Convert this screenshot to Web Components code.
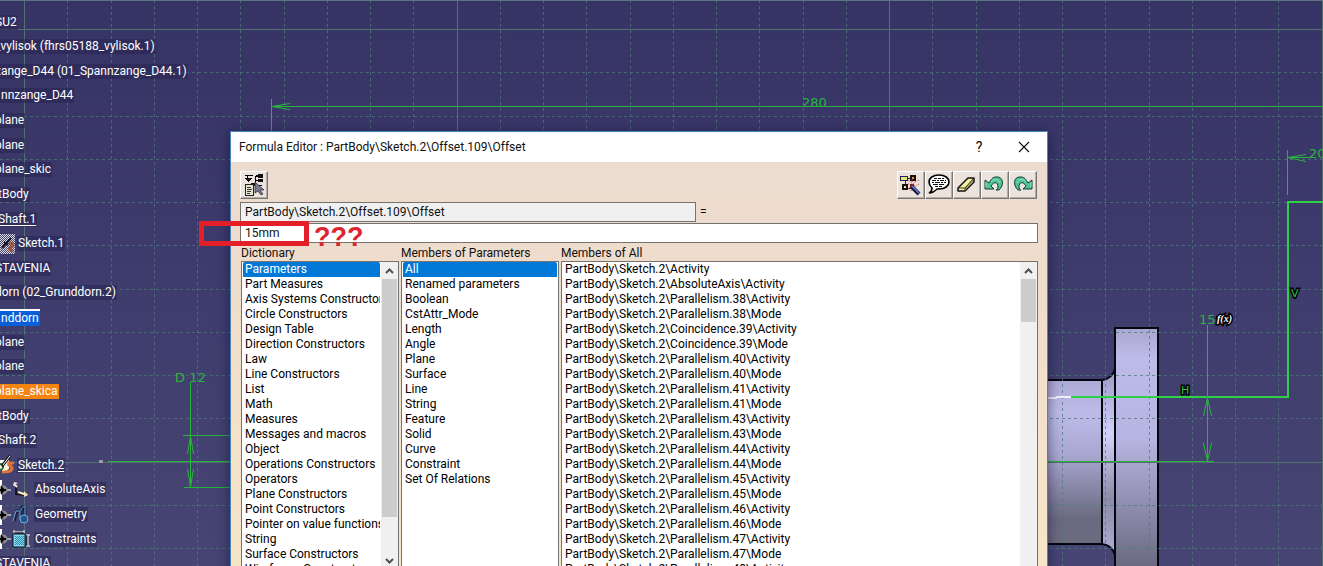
<!DOCTYPE html>
<html lang="en">
<head>
<meta charset="utf-8">
<title>Formula Editor</title>
<style>
    html, body { height: 100%; margin: 0; }
    body {
        overflow: hidden;
        font-family: Roboto, "Open Sans", sans-serif;
        font-size: 12px;
    }
</style>
</head>
<body>
<cad-workspace>
    <sketch-canvas slot="canvas"></sketch-canvas>
    <spec-tree slot="tree"></spec-tree>
    <formula-dialog slot="window" heading="Formula Editor : PartBody\Sketch.2\Offset.109\Offset"></formula-dialog>
    <red-note slot="note">???</red-note>
</cad-workspace>

<script>
// -----------------------------------------
// 1. Data
// -----------------------------------------
const PARAM = 'PartBody\\Sketch.2\\';

const DICTIONARY = [
    'Parameters', 'Part Measures', 'Axis Systems Constructors', 'Circle Constructors', 'Design Table',
    'Direction Constructors', 'Law', 'Line Constructors', 'List', 'Math', 'Measures', 'Messages and macros',
    'Object', 'Operations Constructors', 'Operators', 'Plane Constructors', 'Point Constructors',
    'Pointer on value functions', 'String', 'Surface Constructors', 'Wireframe Constructors'
];

const MEMBER_TYPES = [
    'All', 'Renamed parameters', 'Boolean', 'CstAttr_Mode', 'Length', 'Angle', 'Plane', 'Surface',
    'Line', 'String', 'Feature', 'Solid', 'Curve', 'Constraint', 'Set Of Relations'
];

const MEMBERS = [`${PARAM}Activity`, `${PARAM}AbsoluteAxis\\Activity`];
['Parallelism.38', 'Coincidence.39', 'Parallelism.40', 'Parallelism.41', 'Parallelism.43',
 'Parallelism.44', 'Parallelism.45', 'Parallelism.46', 'Parallelism.47', 'Parallelism.48'].forEach(name => {
    MEMBERS.push(`${PARAM}${name}\\Activity`, `${PARAM}${name}\\Mode`);
});

// kind: cut / nick = label runs off the left edge by more or less
const TREE = [
    { text: 'SU2', kind: 'cut' },
    { text: '_vylisok (fhrs05188_vylisok.1)', kind: 'cut' },
    { text: 'zange_D44 (01_Spannzange_D44.1)', kind: 'cut' },
    { text: 'nnzange_D44' },
    { text: 'plane', kind: 'cut' },
    { text: 'plane', kind: 'cut' },
    { text: 'plane_skic', kind: 'cut' },
    { text: 'tBody', kind: 'nick' },
    { text: 'Shaft.1', kind: 'nick', mark: 'under' },
    { text: 'Sketch.1', icon: 'sketchOff' },
    { text: 'STAVENIA', kind: 'cut' },
    { text: 'dorn (02_Grunddorn.2)', kind: 'cut' },
    { text: 'nddorn', mark: 'blue' },
    { text: 'plane', kind: 'cut' },
    { text: 'plane', kind: 'cut' },
    { text: 'plane_skica', kind: 'cut', mark: 'orange' },
    { text: 'tBody', kind: 'nick' },
    { text: 'Shaft.2', kind: 'nick' },
    { text: 'Sketch.2', icon: 'sketch', mark: 'under' },
    { text: 'AbsoluteAxis', icon: 'axis', child: true },
    { text: 'Geometry', icon: 'geometry', child: true },
    { text: 'Constraints', icon: 'constraints', child: true },
    { text: 'STAVENIA', kind: 'cut' }
];

// -----------------------------------------
// 2. Icons
// -----------------------------------------
const svg = (w, h, body) =>
    `<svg width="${w}" height="${h}" viewBox="0 0 ${w} ${h}" fill="none" aria-hidden="true">${body}</svg>`;

const ICONS = {
    sketchOff: svg(15, 20, `
        <defs><pattern id="chk" width="2" height="2" patternUnits="userSpaceOnUse"><path d="M0 0h1v1H0zM1 1h1v1H1z" fill="#dcdce8"/></pattern></defs>
        <rect width="15" height="20" fill="#4a4668"/><rect width="15" height="20" fill="url(#chk)"/>
        <path d="M2 14 11 4M4 8l4 3" stroke="#15151f" stroke-width="2"/><path d="M9 9c5 0 5 3 2 4s-1 5 2 3" stroke="#9a5840" stroke-width="3"/>`),
    sketch: svg(15, 20, `
        <path d="M0 5h9v9H0z" fill="#f4f4ec"/><circle cx="0" cy="12" r="3" stroke="#2c6b32" stroke-width="2"/>
        <path d="M2 11 10 1" stroke="#16161c" stroke-width="3"/><path d="M3 10 10 1" stroke="#fff"/>
        <path d="M14 8H9c-2 3 4 3 3 6s-5 3-10 3" stroke="#dc743c" stroke-width="3"/><path d="M2 16c2-4 5-4 6-1" fill="#fff2d0"/>`),
    axis: svg(18, 18, `
        <path d="M4 5v8l10 1" stroke="#16161c" stroke-width="2"/><path d="m2 3 3 3M6 11l9 3" stroke="#f6ead0" stroke-width="2"/>
        <path d="M12 10v6l4-2z" fill="#f6e2b0"/><path d="m1 5 1-4 4 1z" fill="#f0e4da"/>`),
    geometry: svg(18, 20, `
        <path d="M2 16 5 6h4v9M10 6V2h3v10" stroke="#14203e" stroke-width="3"/>
        <path d="M1 16 4 6h4v9M9 6c0-4 4-5 4-5v11" stroke="#6aaee0"/>
        <circle cx="12" cy="14" r="4" fill="#2a5488" stroke="#6ab0e4"/>`),
    constraints: svg(18, 20, `
        <defs><pattern id="dot" width="2" height="2" patternUnits="userSpaceOnUse"><path d="M0 0h1v1H0zM1 1h1v1H1z" fill="#2d8ca6"/></pattern></defs>
        <path d="M2 1v4M12 1v4M2 3h10" stroke="#fff"/><path d="M2 4h10" stroke="#101018"/>
        <rect x="1" y="5" width="12" height="13" fill="#7fd8ee" stroke="#0c1420"/><rect x="3" y="7" width="9" height="9" fill="url(#dot)"/>
        <path d="M14 6h4M14 17h4" stroke="#fff"/><path d="M15 6v11" stroke="#101018"/><path d="M16 6v11" stroke="#fff"/>`),
    tree: svg(24, 24, `
        <g shape-rendering="crispEdges"><path d="M3 2.500h8M5.500 2v6M13 3h8M13.500 3v10M13 7.500h6M12 12.500h8" stroke="#000"/><path d="M14 2.500h7" stroke="#000" stroke-width="2"/>
        <path d="M2 5h8l-4 4zM16 1h5v4h-5zM16 6h5v3h-5zM9 10h4v2H9z" fill="#111"/>
        <rect x="3" y="11" width="8" height="11" fill="#e6e8d0" stroke="#222"/><path d="M5 14h4M5 16h5M5 18h4M5 20h3" stroke="#333"/></g>
        <path d="m13 9 9 8h-4l3 4-2 1-3-4-3 2z" fill="#77778e" stroke="#252536" stroke-width=".7"/>`),
    wizard: svg(24, 24, `
        <g shape-rendering="crispEdges"><path d="M8 5h6M6 8v4M5 15h8M8 12v3" stroke="#1e2258"/><rect x="1" y="3" width="7" height="4" fill="#f0e474" stroke="#1c205c"/>
        <rect x="12" y="3" width="4" height="4" fill="#d8a040" stroke="#17120c" stroke-width="2"/><rect x="4" y="12" width="4" height="4" fill="#f2e4b0" stroke="#17120c" stroke-width="2"/><rect x="11" y="11" width="4" height="4" fill="#5a2018"/></g>
        <path d="m9 7 8 7M17 8l-8 8M13 6v3M20 11l-3 2M10 11H8M12 18v-3M19 8l1-2" stroke="#c8383c" stroke-dasharray="1 1"/>
        <path d="m13 14 7 7" stroke="#10163c" stroke-width="4"/><path d="m13 13 7 7" stroke="#6a82dc" stroke-width="1.5"/>`),
    bubble: svg(24, 24, `
        <path d="M12 2c6 0 10 3 10 7s-4 7-10 7h-2c-2 2-4 4-8 4 2-1 3-3 3-5-2-2-3-3-3-6 0-4 4-7 10-7z" fill="#fff" stroke="#000" stroke-width="1.6"/>
        <g stroke="#111"><path d="M7 5.500h10" stroke-dasharray="3 1"/><path d="M5 7.500h14" stroke-dasharray="4 1 2 1"/><path d="M5 9.500h14" stroke-dasharray="2 1 5 1"/><path d="M6 11.500h12" stroke-dasharray="5 1"/><path d="M8 13.500h8" stroke-dasharray="3 1"/></g>`),
    eraser: svg(24, 24, `
        <path d="m3 15 10-10h6v4l-9 9H3z" fill="#f6f2a4" stroke="#111" stroke-width="1.5" stroke-linejoin="round"/>
        <path d="m10 17 8-8V6l-8 9z" fill="#a89864"/><path d="M3 15h7l8-9M10 15v3" stroke="#3c3820"/>`),
    undo: svg(24, 24, `
        <path d="M2 7v9h9l-3-3c3-5 7-4 7 1 0 2-1 3-2 3h3c5-4 5-14-3-13-4 0-5 3-7 6z" fill="#4fc29a" stroke="#123c2e" stroke-linejoin="round"/><path d="M3 9v5M8 9c3-3 7-4 9 1" stroke="#8ee8c4"/>`),
    redo: svg(24, 24, `
        <path d="M21 7v9h-9l3-3c-3-5-7-4-7 1 0 2 1 3 2 3H7c-5-4-5-14 3-13 4 0 5 3 7 6z" fill="#4fc29a" stroke="#123c2e" stroke-linejoin="round"/><path d="M20 9v5M15 9c-3-3-7-4-9 1" stroke="#8ee8c4"/>`),
    close: svg(12, 12, `<path d="m1 1 10 10M11 1 1 11" stroke="#111" stroke-width="1.2"/>`),
    up: svg(9, 6, `<path d="m1 5 3.500-3.500L8 5" stroke="#505050" stroke-width="2"/>`),
    down: svg(9, 6, `<path d="m1 1 3.500 3.500L8 1" stroke="#505050" stroke-width="2"/>`)
};

/**
 * Attaches an open shadow root filled with the given markup
 * @param {HTMLElement} host
 * @param {string} html
 */
const render = (host, html) => {
    const template = document.createElement('template');
    template.innerHTML = html;
    host.attachShadow({ mode: 'open' }).appendChild(template.content.cloneNode(true));
};

// -----------------------------------------
// 3. Workspace and sketch
// -----------------------------------------
class CadWorkspace extends HTMLElement {
    constructor() {
        super();
        render(this, `
            <style>
                :host {
                    display: block;
                    position: relative;
                    height: 100vh;
                    overflow: hidden;
                    background: linear-gradient(#363365, #3f3d6d 55%, #474573);
                }
                ::slotted([slot="canvas"]) { position: absolute; inset: 0; }
                ::slotted([slot="tree"]) { position: absolute; left: 0; top: 12px; bottom: -8px; }
                ::slotted([slot="window"]) { position: absolute; left: 230px; right: 275px; top: 131px; }
                ::slotted([slot="note"]) { position: absolute; left: 199px; top: 221px; }
            </style>
            <slot name="canvas"></slot>
            <slot name="tree"></slot>
            <slot name="window"></slot>
            <slot name="note"></slot>
        `);
    }
}

class SketchCanvas extends HTMLElement {
    constructor() {
        super();
        render(this, `
            <style>
                :host { display: block; }
                svg { display: block; width: 100%; height: 100%; font-family: "DejaVu Sans", sans-serif; }
                .dash { stroke: #4f7a79; stroke-dasharray: 3 3; opacity: .75; }
                .major { stroke: #51706f; }
                .dim { stroke: #28b43c; fill: none; }
                .val { fill: #28b43c; font-size: 13px; }
                .axis { fill: #28c840; stroke: #000; stroke-width: 3; paint-order: stroke; font-size: 11px; }
                .fx { fill: #fff; stroke: #000; stroke-width: 3; paint-order: stroke; font: italic bold 10px "Liberation Serif", serif; }
                .edge { stroke: #05050f; stroke-width: 2; fill: none; }
            </style>
            <svg fill="none">
                <defs>
                    <linearGradient id="body" x2="0" y2="1"><stop stop-color="#aeaad6"/><stop offset=".2" stop-color="#bdbbe8"/><stop offset=".45" stop-color="#aaa8d2"/><stop offset=".85" stop-color="#6a697f"/><stop offset="1" stop-color="#6d6b80"/></linearGradient>
                    <linearGradient id="flange" x2="0" y2="1"><stop stop-color="#a9a7ce"/><stop offset=".12" stop-color="#bdbbe8"/><stop offset=".45" stop-color="#b6b4e0"/><stop offset="1" stop-color="#65647a"/></linearGradient>
                    <linearGradient id="neck" x2="0" y2="1"><stop stop-color="#9c9ac4"/><stop offset=".35" stop-color="#d2d1fa"/><stop offset=".7" stop-color="#8b8aa8"/><stop offset="1" stop-color="#b0aed4"/></linearGradient>
                </defs>
                <rect x="1040" y="380" width="62" height="164" fill="url(#body)"/>
                <path d="M1102 380q10-1 13-11v186q-3-10-13-11z" fill="url(#neck)"/>
                <rect x="1115" y="328" width="43" height="248" fill="url(#flange)"/>
                <path class="edge" d="M1040 380h62q10-1 13-11V328h43v240M1102 380v164M1040 544h62q10 1 13 11M1115 369v197"/>
                <g id="grid"></g>

                <path class="dim" d="M271.500 99v33M271 106.500h1060M290 103.500l-18 3 18 3"/>
                <text class="val" x="802" y="107">280</text>
                <path class="dim" d="M190.500 382v105M183 435.500h60M108 461.500h135M184 487.500h59M187.500 454l3-18 3 18M187.500 469l3 18 3-18"/>
                <text class="val" x="175" y="382">D 12</text>
                <rect x="99" y="460" width="4" height="3" fill="#9a9aa8"/>
                <path class="dim" d="M1287.500 150v45M1306 154.500l-18 3 18 4M1288 157.500h22"/>
                <text class="val" x="1309" y="158">20</text>
                <path d="M1330 202h-42v195h-218" stroke="#2fd048" stroke-width="2"/>
                <path d="M1040 398h16l1-1h14" stroke="#f0f0f8" stroke-width="2"/>
                <path class="dim" d="M1207.500 325v136M1040 461.500h174M1203.500 416l4-18 4 18M1203.500 443l4 18 4-18"/>
                <text class="val" x="1199" y="324">15</text>
                <text class="fx" x="1217" y="322">f(x)</text>
                <text class="axis" x="1181" y="394">H</text>
                <text class="axis" x="1291" y="297">V</text>
                <path d="M0 .500h4000" stroke="#5f7280"/>
            </svg>
        `);
    }

    connectedCallback() {
        // One solid line in ten, the others dashed
        const pitch = 43.25;
        let lines = '';
        for (let i = 0; i < 60; i++) {
            const x = Math.floor(24.5 + i * pitch) + 0.5;
            const y = Math.floor(29.5 + i * pitch) + 0.5;
            const cls = i % 10 ? 'dash' : 'major';
            lines += `<path class="${cls}" d="M${x} 0v2600M0 ${y}h2600"/>`;
        }
        this.shadowRoot.getElementById('grid').innerHTML = lines;
    }
}

// -----------------------------------------
// 4. Specification tree
// -----------------------------------------
class SpecTree extends HTMLElement {
    constructor() {
        super();
        render(this, `
            <style>
                :host { display: block; color: #fff; }
                ul {
                    display: flex;
                    flex-direction: column;
                    justify-content: space-between;
                    height: 100%;
                    margin: 0;
                    padding: 0;
                    list-style: none;
                }
                li { display: flex; align-items: center; height: 20px; white-space: nowrap; }
                li.cut { margin-left: -6px; }
                li.nick { margin-left: -3px; }
                span { padding: 0 1px; line-height: 15px; background: rgba(42, 38, 84, .6); }
                .icon { display: flex; margin-right: 2px; }
                .child .icon { margin: 0 4px 0 1px; }
                .under { text-decoration: underline; text-underline-offset: 2px; }
                .blue { background: #0a5fd8; border-top: 2px solid #fff; }
                .orange { background: #f58410; }
                .node { display: flex; }
            </style>
            <ul></ul>
        `);
    }

    connectedCallback() {
        const node = svg(11, 20, '<path d="M1 0v20" stroke="#fff" stroke-width="2"/><path d="M7 10h4" stroke="#fff"/><circle cx="3" cy="10" r="4.500" fill="#8c8c90"/><path d="m1 5 4 5-4 5z" fill="#000"/><path d="M0 10h6" stroke="#000" stroke-width="2"/>');
        this.shadowRoot.querySelector('ul').innerHTML = TREE.map(item => `
            <li class="${item.kind || ''} ${item.child ? 'child' : ''}">
                ${item.child ? `<div class="node">${node}</div>` : ''}
                ${item.icon ? `<div class="icon">${ICONS[item.icon]}</div>` : ''}
                <span class="${item.mark || ''}">${item.text}</span>
            </li>`).join('');
    }
}

// -----------------------------------------
// 5. Dialog parts
// -----------------------------------------
class ToolButton extends HTMLElement {
    connectedCallback() {
        render(this, `
            <style>
                :host { display: block; }
                button {
                    display: flex;
                    align-items: center;
                    justify-content: center;
                    width: 28px;
                    height: 28px;
                    padding: 0;
                    background: #ece4dc;
                    border: 1px solid;
                    border-color: #fff #777 #777 #fff;
                    box-shadow: inset -1px -1px #b4aca6;
                }
            </style>
            <button type="button" aria-label="${this.getAttribute('label')}">${ICONS[this.getAttribute('icon')]}</button>
        `);
    }
}

class ListPane extends HTMLElement {
    constructor() {
        super();
        render(this, `
            <style>
                :host { display: flex; flex-direction: column; min-width: 0; }
                label { line-height: 16px; white-space: nowrap; }
                .box {
                    display: flex;
                    box-sizing: border-box;
                    height: 326px;
                    background: #fff;
                    border: 1px solid #76726e;
                }
                select {
                    flex: 1;
                    min-width: 0;
                    margin: 0 1px;
                    padding: 0;
                    border: 0;
                    outline: 0;
                    overflow: hidden;
                    scrollbar-width: none;
                    background: #fff;
                    font: inherit;
                    color: #000;
                }
                option { height: 15px; min-height: 15px; line-height: 15px; padding: 0 2px; }
                option:checked {
                    background: linear-gradient(#0078d7, #0078d7);
                    -webkit-text-fill-color: #fff;
                }
                .bar { display: none; flex-direction: column; width: 17px; background: #f0f0f0; }
                .bar i { display: flex; align-items: center; justify-content: center; height: 17px; }
                .thumb { background: #cdcdcd; margin: 0 1px; }
                .rest { flex: 1; }
                :host([bar]) .bar { display: flex; }
                :host([bar="long"]) .thumb { height: 238px; }
                :host([bar="short"]) .thumb { height: 43px; }
                :host([bar="long"]) .bar { margin-bottom: 17px; }
            </style>
            <label for="list"></label>
            <div class="box">
                <select id="list" size="21"></select>
                <div class="bar"><i>${ICONS.up}</i><div class="thumb"></div><div class="rest"></div><i>${ICONS.down}</i></div>
            </div>
        `);
    }

    set items(values) {
        const select = this.shadowRoot.querySelector('select');
        const fragment = document.createDocumentFragment();
        values.forEach(value => fragment.appendChild(new Option(value)));
        select.appendChild(fragment);
        if (!this.hasAttribute('plain')) select.selectedIndex = 0;
    }

    connectedCallback() {
        this.shadowRoot.querySelector('label').textContent = this.getAttribute('label');
    }
}

class FormulaDialog extends HTMLElement {
    constructor() {
        super();
        render(this, `
            <style>
                :host {
                    display: block;
                    box-sizing: border-box;
                    border: 1px solid #4586bd;
                    background: #ecdccf;
                    box-shadow: 0 2px 12px rgba(10, 10, 50, .55);
                    color: #111;
                }
                header {
                    display: flex;
                    align-items: center;
                    height: 30px;
                    padding: 0 17px 0 8px;
                    background: #fff;
                }
                h1 { flex: 1; margin: 0; font-size: 12px; font-weight: 400; white-space: nowrap; }
                header button { display: flex; justify-content: center; width: 12px; padding: 0; border: 0; background: none; font: inherit; font-size: 14px; }
                .controls { display: flex; align-items: center; gap: 33px; }
                main {
                    display: flex;
                    flex-direction: column;
                    padding: 9px 9px 12px;
                    background: linear-gradient(#ecdcd0, #eedccc 20%, #f8e6c8);
                }
                .tools { display: flex; margin-right: 1px; }
                .tools :first-child { margin-right: auto; }
                .target { display: flex; align-items: center; gap: 4px; margin: 3px 0 1px; }
                input {
                    box-sizing: border-box;
                    height: 20px;
                    padding: 0 4px;
                    border: 1px solid #76726e;
                    border-radius: 0;
                    background: #fff;
                    font: inherit;
                    color: #111;
                }
                .target input { width: 456px; background: #f0f0f0; }
                .lists { display: grid; grid-template-columns: 158px 158px 1fr; gap: 2px; margin: 2px 0 0 1px; }
            </style>
            <header>
                <h1></h1>
                <div class="controls">
                    <button type="button" aria-label="Help">?</button>
                    <button type="button" aria-label="Close">${ICONS.close}</button>
                </div>
            </header>
            <main>
                <div class="tools">
                    <tool-button icon="tree" label="Incremental"></tool-button>
                    <tool-button icon="wizard" label="Wizard"></tool-button>
                    <tool-button icon="bubble" label="Comment"></tool-button>
                    <tool-button icon="eraser" label="Clear"></tool-button>
                    <tool-button icon="undo" label="Undo"></tool-button>
                    <tool-button icon="redo" label="Redo"></tool-button>
                </div>
                <div class="target">
                    <input id="target" readonly aria-label="Parameter" value="${PARAM}Offset.109\\Offset">
                    <label for="target">=</label>
                </div>
                <input aria-label="Formula" value="15mm">
                <div class="lists">
                    <list-pane id="dictionary" label="Dictionary" bar="long"></list-pane>
                    <list-pane id="types" label="Members of Parameters"></list-pane>
                    <list-pane id="members" label="Members of All" bar="short" plain></list-pane>
                </div>
            </main>
        `);
    }

    connectedCallback() {
        const root = this.shadowRoot;
        root.querySelector('h1').textContent = this.getAttribute('heading');
        customElements.upgrade(root);
        root.getElementById('dictionary').items = DICTIONARY;
        root.getElementById('types').items = MEMBER_TYPES;
        root.getElementById('members').items = MEMBERS;
    }
}

class RedNote extends HTMLElement {
    constructor() {
        super();
        render(this, `
            <style>
                :host {
                    display: flex;
                    align-items: flex-start;
                    gap: 5px;
                    color: #dc2430;
                    font: bold 27px/25px "Liberation Sans", sans-serif;
                }
                .frame { box-sizing: border-box; width: 110px; height: 25px; border: 5px solid #e3202a; }
                .marks { margin-top: 4px; }
            </style>
            <div class="frame"></div>
            <div class="marks"><slot></slot></div>
        `);
    }
}

customElements.define('tool-button', ToolButton);
customElements.define('list-pane', ListPane);
customElements.define('formula-dialog', FormulaDialog);
customElements.define('sketch-canvas', SketchCanvas);
customElements.define('spec-tree', SpecTree);
customElements.define('red-note', RedNote);
customElements.define('cad-workspace', CadWorkspace);
</script>
</body>
</html>
